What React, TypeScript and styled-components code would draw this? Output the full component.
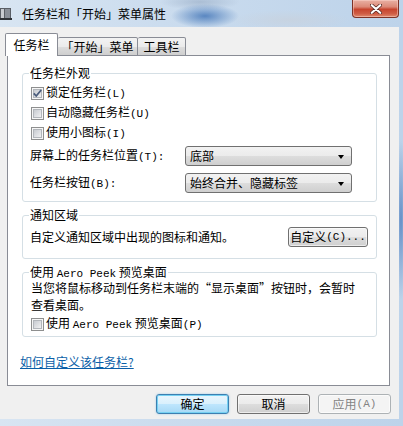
import React from 'react';
import styled, { createGlobalStyle } from 'styled-components';

const Global = createGlobalStyle`
  html, body { margin: 0; padding: 0; width: 403px; height: 426px; overflow: hidden; }
  body {
    font-family: "Noto Sans CJK SC", "Microsoft YaHei", sans-serif;
    font-size: 12px;
    color: #000;
    background: #c6d9ee;
  }
  * { box-sizing: border-box; }
`;

const Window = styled.div`
  width: 403px;
  height: 426px;
  display: flex;
  flex-direction: column;
  padding: 0 4px 7px 0;
  background:
    radial-gradient(ellipse 34px 12px at 205px 16px, rgba(70, 120, 185, 0.85), rgba(70, 120, 185, 0) 100%),
    radial-gradient(ellipse 60px 10px at 290px 20px, rgba(200, 210, 222, 0.8), rgba(200, 210, 222, 0) 100%),
    radial-gradient(ellipse 40px 8px at 200px 2px, rgba(150, 170, 195, 0.6), rgba(150, 170, 195, 0) 100%),
    radial-gradient(ellipse 6px 80px at 401px 220px, rgba(90, 135, 195, 0.9), rgba(90, 135, 195, 0) 100%),
    linear-gradient(90deg, #d8e5f2 0%, #cbdcee 40%, #bdd3ea 100%);
`;

const TitleBar = styled.div`
  height: 27px;
  display: flex;
  align-items: center;
  flex-shrink: 0;
`;

const TitleIcon = styled.svg`
  width: 12px;
  height: 13px;
  flex-shrink: 0;
`;

const TitleText = styled.div`
  margin-left: 10px;
  font-size: 12px;
  line-height: 14px;
  color: #000;
  flex: 1;
  padding-top: 1px;
`;

const CloseButton = styled.div`
  align-self: flex-start;
  width: 47px;
  height: 18px;
  border: 1px solid #7d3327;
  border-top: none;
  border-radius: 0 0 4px 4px;
  background: linear-gradient(180deg, #e9b1a4 0%, #dc8a78 40%, #c7452e 55%, #cf5d45 80%, #e08a6e 100%);
  box-shadow: inset 0 0 0 1px rgba(255, 220, 210, 0.45);
  display: flex;
  align-items: center;
  justify-content: center;
`;

const Client = styled.div`
  flex: 1;
  display: flex;
  flex-direction: column;
  background: #f0f0f0;
  padding: 6px 9px 5px 7px;
`;

const TabStrip = styled.div`
  display: flex;
  align-items: flex-end;
  height: 23px;
  margin-left: -2px;
  margin-bottom: -1px;
  position: relative;
  z-index: 1;
`;

const Tab = styled.div<{ $active?: boolean; $w: number }>`
  width: ${(p) => p.$w}px;
  height: ${(p) => (p.$active ? 23 : 19)}px;
  display: flex;
  align-items: center;
  justify-content: center;
  border: 1px solid #898c95;
  border-bottom: ${(p) => (p.$active ? 'none' : '1px solid #898c95')};
  border-left: ${(p) => (p.$active ? '1px solid #898c95' : 'none')};
  border-radius: 2px 2px 0 0;
  background: ${(p) =>
    p.$active ? '#ffffff' : 'linear-gradient(180deg, #f3f3f3 0%, #ebebeb 50%, #dddddd 51%, #cfcfcf 100%)'};
  padding-top: ${(p) => (p.$active ? 0 : 1)}px;
  font-size: 12px;
  line-height: 14px;
  white-space: nowrap;
`;

const Panel = styled.div`
  flex: 1;
  display: flex;
  flex-direction: column;
  background: #ffffff;
  border: 1px solid #898c95;
  padding: 0 12px 0 14px;
`;

const Group = styled.div<{ $top: number }>`
  position: relative;
  margin-top: ${(p) => p.$top}px;
  border: 1px solid #d5dfe5;
  border-radius: 3px;
  display: flex;
  flex-direction: column;
`;

const Legend = styled.span`
  position: absolute;
  top: -8px;
  left: 6px;
  padding: 0 1px;
  background: #ffffff;
  line-height: 14px;
  white-space: nowrap;
`;

const GroupBody = styled.div<{ $pad: string }>`
  padding: ${(p) => p.$pad};
  display: flex;
  flex-direction: column;
`;

const CheckRow = styled.div<{ $mt?: number }>`
  height: 20px;
  display: flex;
  align-items: center;
  gap: 2px;
  padding-left: 1px;
  margin-top: ${(p) => p.$mt || 0}px;
  white-space: nowrap;
  line-height: 14px;
`;

const Latin = styled.span`
  font-family: "Liberation Mono", "DejaVu Sans Mono", monospace;
  font-size: 11px;
`;

const SelectRow = styled.div<{ $mt: number }>`
  display: grid;
  grid-template-columns: 155px 167px;
  align-items: center;
  margin-top: ${(p) => p.$mt}px;
  line-height: 14px;
  white-space: nowrap;
`;

const Combo = styled.div`
  height: 20px;
  border: 1px solid #707070;
  border-radius: 3px;
  background: linear-gradient(180deg, #f2f2f2 0%, #ebebeb 50%, #dddddd 51%, #cfcfcf 100%);
  display: flex;
  align-items: center;
  justify-content: space-between;
  padding: 0 7px 0 4px;
  line-height: 14px;
`;

const Arrow = styled.span`
  width: 0;
  height: 0;
  border-left: 3.5px solid transparent;
  border-right: 3.5px solid transparent;
  border-top: 4px solid #000;
  margin-top: 1px;
`;

const NotifyRow = styled.div`
  display: flex;
  align-items: center;
  justify-content: space-between;
  line-height: 14px;
`;

const Button = styled.div<{ $kind?: 'default' | 'disabled' | 'normal'; $w: number }>`
  width: ${(p) => p.$w}px;
  height: 20px;
  border-radius: 3px;
  display: flex;
  align-items: center;
  justify-content: center;
  line-height: 14px;
  white-space: nowrap;
  border: 1px solid ${(p) => (p.$kind === 'default' ? '#3c7fb1' : p.$kind === 'disabled' ? '#adb2b5' : '#707070')};
  color: ${(p) => (p.$kind === 'disabled' ? '#838383' : '#000')};
  background: ${(p) =>
    p.$kind === 'default'
      ? 'linear-gradient(180deg, #eaf6fd 0%, #d9f0fc 50%, #bee6fd 51%, #a7d9f5 100%)'
      : p.$kind === 'disabled'
      ? '#f4f4f4'
      : 'linear-gradient(180deg, #f2f2f2 0%, #ebebeb 50%, #dddddd 51%, #cfcfcf 100%)'};
  box-shadow: ${(p) =>
    p.$kind === 'default' ? 'inset 0 0 0 1px #76d1f2, 0 0 2px rgba(60,160,220,0.5)' : 'inset 0 0 0 1px rgba(255,255,255,0.6)'};
`;

const Para = styled.div`
  padding-left: 1px;
  display: flex;
  flex-direction: column;
`;

const ParaLine = styled.div`
  height: 17px;
  line-height: 17px;
  white-space: nowrap;
`;

const LinkRow = styled.div`
  margin-top: 18px;
  margin-left: -2px;
  line-height: 14px;
`;

const Link = styled.a`
  color: #0b5fa8;
  text-decoration: underline;
  cursor: pointer;
`;

const ButtonBar = styled.div`
  margin-top: 8px;
  display: flex;
  justify-content: flex-end;
  gap: 8px;
  margin-right: -1px;
`;

const CheckBox: React.FC<{ checked?: boolean }> = ({ checked }) => (
  <svg width="13" height="13" viewBox="0 0 13 13" style={{ flexShrink: 0 }}>
    <defs>
      <linearGradient id="cbfill" x1="0" y1="0" x2="1" y2="1">
        <stop offset="0" stopColor="#c4c8ce" />
        <stop offset="1" stopColor="#f3f3f4" />
      </linearGradient>
    </defs>
    <rect x="0.5" y="0.5" width="12" height="12" fill="#f6f6f6" stroke="#8e8f8f" />
    <rect x="2.5" y="2.5" width="8" height="8" fill="url(#cbfill)" stroke="#b2b6bb" />
    {checked && (
      <path d="M2.8 6.3 L5.2 9 L10.2 3" stroke="#4b5d7c" strokeWidth="1.8" fill="none" strokeLinejoin="round" />
    )}
  </svg>
);

export default function App() {
  return (
    <>
      <Global />
      <Window>
        <TitleBar>
          <TitleIcon viewBox="0 0 12 13">
            <rect x="0" y="1" width="11" height="11" fill="#5a5f66" />
            <rect x="1" y="2" width="3" height="9" fill="#c8ccd1" />
            <rect x="5" y="2" width="5" height="9" fill="#8a9099" />
            <rect x="0" y="11" width="12" height="2" fill="#2f3338" />
          </TitleIcon>
          <TitleText>任务栏和「开始」菜单属性</TitleText>
          <CloseButton>
            <svg width="12" height="10" viewBox="0 0 12 10">
              <path d="M1.5 1 L10.5 9 M10.5 1 L1.5 9" stroke="#5a2a24" strokeWidth="3.6" strokeLinecap="round" />
              <path d="M1.8 1.2 L10.2 8.8 M10.2 1.2 L1.8 8.8" stroke="#ffffff" strokeWidth="2.2" strokeLinecap="round" />
            </svg>
          </CloseButton>
        </TitleBar>
        <Client>
          <TabStrip>
            <Tab $active $w={53}>任务栏</Tab>
            <Tab $w={80}>「开始」菜单</Tab>
            <Tab $w={48}>工具栏</Tab>
          </TabStrip>
          <Panel>
            <Group $top={17}>
              <Legend>任务栏外观</Legend>
              <GroupBody $pad="9px 0 8px 7px">
                <CheckRow>
                  <CheckBox checked />
                  <span>锁定任务栏<Latin>(L)</Latin></span>
                </CheckRow>
                <CheckRow>
                  <CheckBox />
                  <span>自动隐藏任务栏<Latin>(U)</Latin></span>
                </CheckRow>
                <CheckRow>
                  <CheckBox />
                  <span>使用小图标<Latin>(I)</Latin></span>
                </CheckRow>
                <SelectRow $mt={3}>
                  <span>屏幕上的任务栏位置<Latin>(T):</Latin></span>
                  <Combo>
                    <span>底部</span>
                    <Arrow />
                  </Combo>
                </SelectRow>
                <SelectRow $mt={7}>
                  <span>任务栏按钮<Latin>(B):</Latin></span>
                  <Combo>
                    <span>始终合并、隐藏标签</span>
                    <Arrow />
                  </Combo>
                </SelectRow>
              </GroupBody>
            </Group>
            <Group $top={13}>
              <Legend>通知区域</Legend>
              <GroupBody $pad="11px 8px 11px 7px">
                <NotifyRow>
                  <span>自定义通知区域中出现的图标和通知。</span>
                  <Button $w={80}>自定义<Latin>(C)...</Latin></Button>
                </NotifyRow>
              </GroupBody>
            </Group>
            <Group $top={13}>
              <Legend>使用 <Latin>Aero Peek</Latin> 预览桌面</Legend>
              <GroupBody $pad="6px 0 2px 7px">
                <Para>
                  <ParaLine>当您将鼠标移动到任务栏末端的“显示桌面”按钮时，会暂时</ParaLine>
                  <ParaLine>查看桌面。</ParaLine>
                </Para>
                <CheckRow $mt={1}>
                  <CheckBox />
                  <span>使用 <Latin>Aero Peek</Latin> 预览桌面<Latin>(P)</Latin></span>
                </CheckRow>
              </GroupBody>
            </Group>
            <LinkRow>
              <Link>如何自定义该任务栏?</Link>
            </LinkRow>
          </Panel>
          <ButtonBar>
            <Button $kind="default" $w={73}>确定</Button>
            <Button $w={73}>取消</Button>
            <Button $kind="disabled" $w={73}>应用<Latin>(A)</Latin></Button>
          </ButtonBar>
        </Client>
      </Window>
    </>
  );
}
